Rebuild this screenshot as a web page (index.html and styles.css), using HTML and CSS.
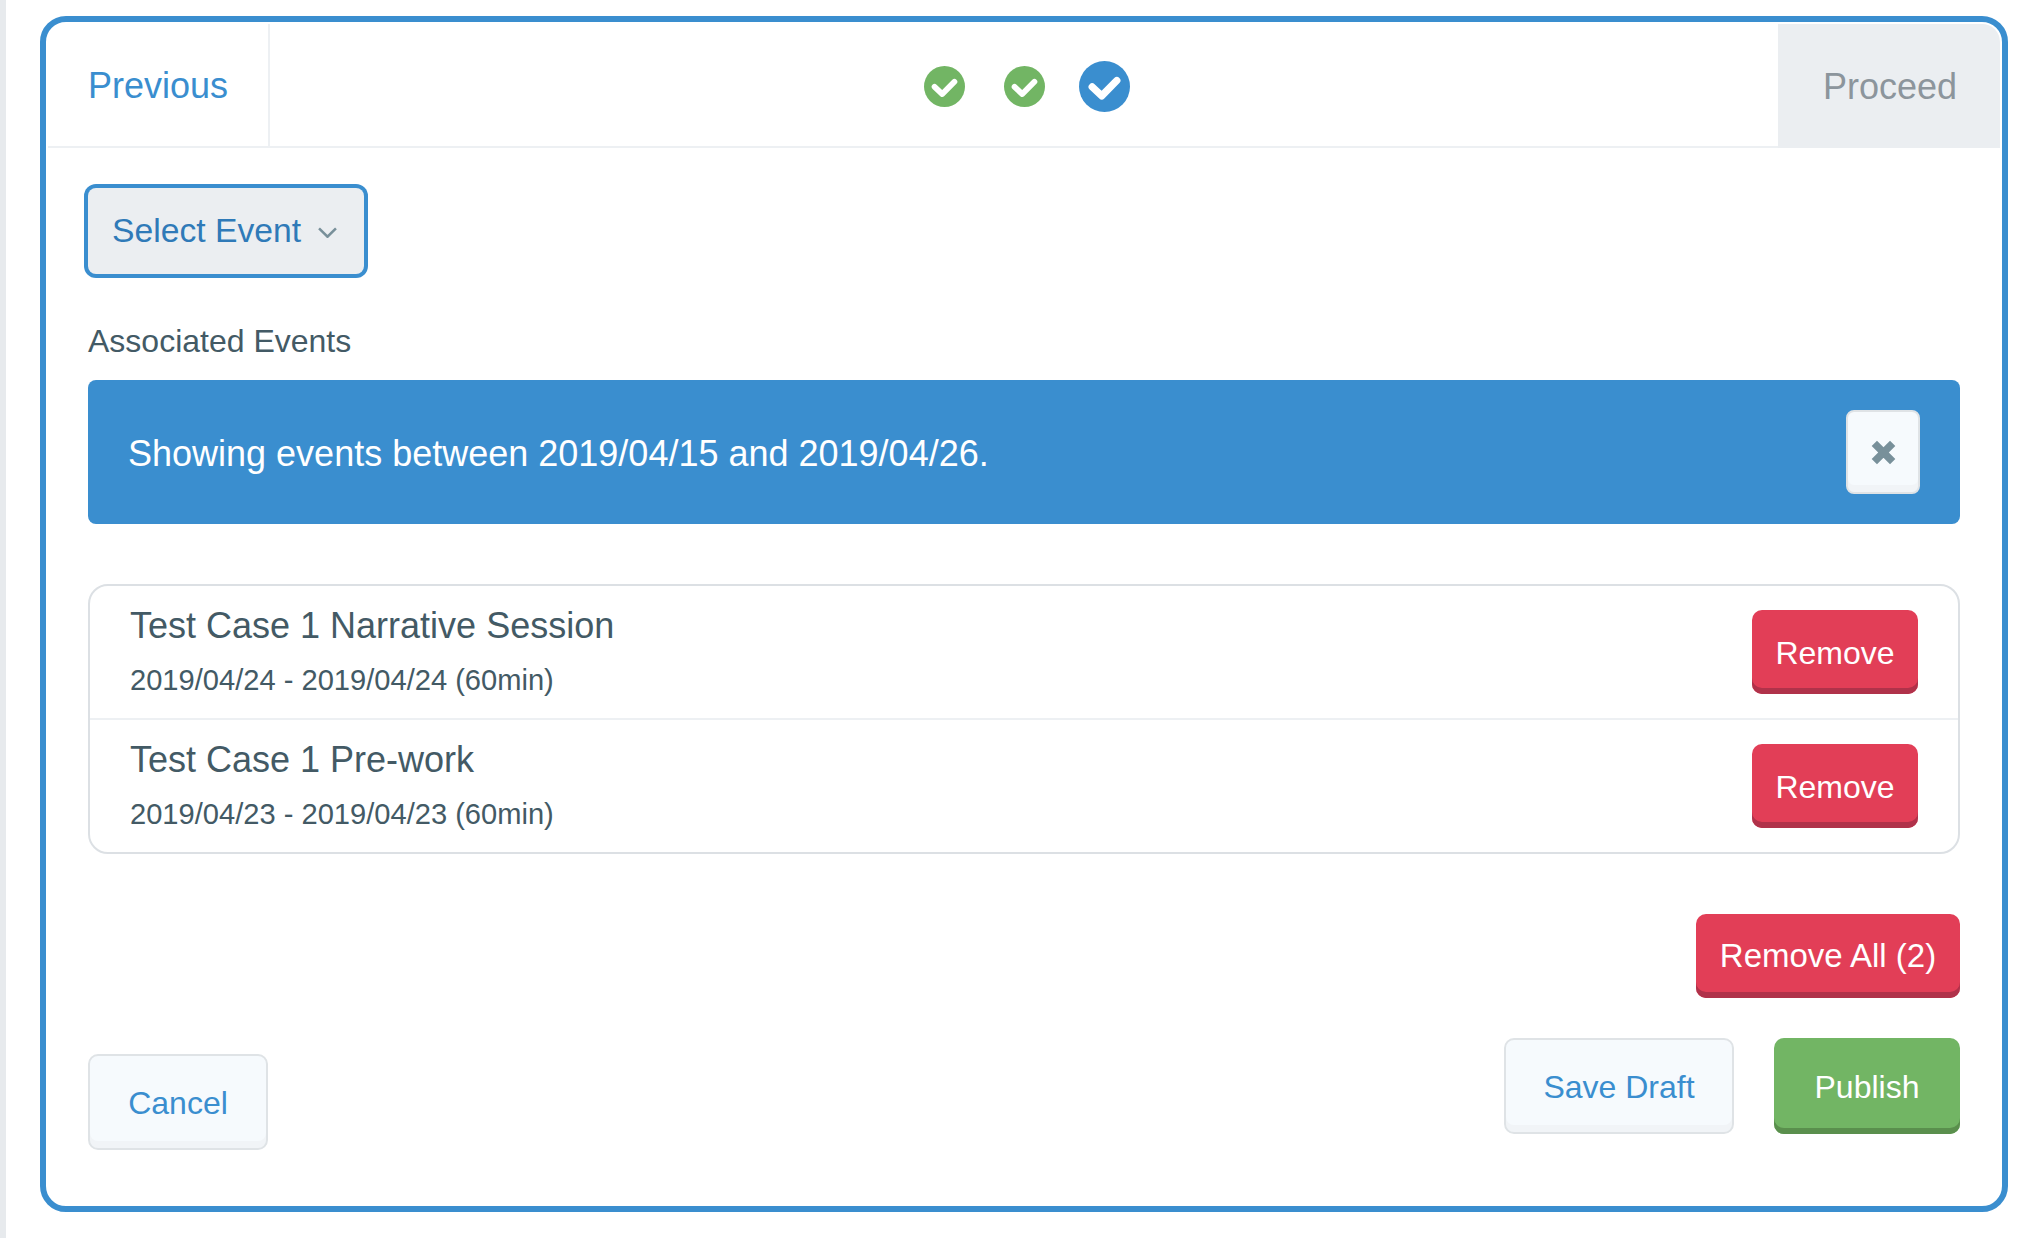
FILE: index.html
```html
<!DOCTYPE html>
<html lang="en">
<head>
    <meta charset="UTF-8">
    <title>Associated Events</title>
    <link rel="stylesheet" href="styles.css">
</head>
<body>
    <div class="page-edge"></div>

    <div class="frame">
        <div class="wizard-nav">
            <a class="nav-prev">Previous</a>
            <div class="steps">
                <span class="step">
                    <svg class="step-icon" viewBox="0 0 24 24"><circle cx="12" cy="12" r="12" fill="#72b564"/><path d="M6.2 12.2 10.7 16.4 17.8 9.2" fill="none" stroke="#fff" stroke-width="3.4" stroke-linecap="round" stroke-linejoin="round"/></svg>
                </span>
                <span class="step">
                    <svg class="step-icon" viewBox="0 0 24 24"><circle cx="12" cy="12" r="12" fill="#72b564"/><path d="M6.2 12.2 10.7 16.4 17.8 9.2" fill="none" stroke="#fff" stroke-width="3.4" stroke-linecap="round" stroke-linejoin="round"/></svg>
                </span>
                <span class="step">
                    <svg class="step-icon step-icon-active" viewBox="0 0 24 24"><circle cx="12" cy="12" r="12" fill="#3a8ecf"/><path d="M6.2 12.2 10.7 16.4 17.8 9.2" fill="none" stroke="#fff" stroke-width="3.4" stroke-linecap="round" stroke-linejoin="round"/></svg>
                </span>
            </div>
            <a class="nav-next">Proceed</a>
        </div>

        <div class="content">
            <button class="select-btn">
                Select Event
                <svg class="chevron" viewBox="0 0 18 10"><path d="M1 1 9 9 17 1" fill="none" stroke="#78909a" stroke-width="2.4"/></svg>
            </button>

            <div class="section-label">Associated Events</div>

            <div class="alert">
                <span class="alert-text">Showing events between 2019/04/15 and 2019/04/26.</span>
                <button class="alert-close">
                    <svg class="close-icon" viewBox="0 0 24 24"><path d="M3.2 3.2 20.8 20.8M20.8 3.2 3.2 20.8" fill="none" stroke="#78909a" stroke-width="7.2"/></svg>
                </button>
            </div>

            <div class="event-list">
                <div class="event-row">
                    <div class="event-info">
                        <div class="event-title">Test Case 1 Narrative Session</div>
                        <div class="event-date">2019/04/24 - 2019/04/24 (60min)</div>
                    </div>
                    <button class="btn btn-danger btn-remove">Remove</button>
                </div>
                <div class="event-row">
                    <div class="event-info">
                        <div class="event-title">Test Case 1 Pre-work</div>
                        <div class="event-date">2019/04/23 - 2019/04/23 (60min)</div>
                    </div>
                    <button class="btn btn-danger btn-remove">Remove</button>
                </div>
            </div>

            <div class="remove-all-row">
                <button class="btn btn-danger btn-remove-all">Remove All (2)</button>
            </div>

            <div class="footer">
                <button class="btn btn-light btn-cancel">Cancel</button>
                <div class="footer-right">
                    <button class="btn btn-light btn-draft">Save Draft</button>
                    <button class="btn btn-success btn-publish">Publish</button>
                </div>
            </div>
        </div>
    </div>
</body>
</html>
```

FILE: styles.css
```css
* {
    box-sizing: border-box;
}

body {
    display: flex;
    height: 1238px;
    margin: 0;
    overflow: hidden;
    font-family: "Liberation Sans", Arial, sans-serif;
    background: #fff;
    color: #435a65;
}

button {
    font-family: inherit;
    cursor: pointer;
}

.page-edge {
    width: 6px;
    background: #e7eaed;
}

.frame {
    width: 1968px;
    height: 1196px;
    margin: 16px 0 0 34px;
    padding: 2px;
    border: 6px solid #3a8ecf;
    border-radius: 26px;
}

.wizard-nav {
    display: flex;
    height: 124px;
}

.nav-prev {
    display: flex;
    align-items: center;
    width: 222px;
    padding: 2px 0 0 40px;
    border-right: 2px solid #edf0f3;
    border-bottom: 2px solid #edf0f3;
    font-size: 36px;
    color: #3a8ecf;
}

.steps {
    flex: 1;
    display: flex;
    justify-content: center;
    align-items: center;
    padding-top: 2px;
    border-bottom: 2px solid #edf0f3;
}

.step {
    display: flex;
    justify-content: center;
    width: 80px;
}

.step-icon {
    width: 41px;
    height: 41px;
}

.step-icon-active {
    width: 51px;
    height: 51px;
}

.nav-next {
    display: flex;
    align-items: center;
    justify-content: center;
    width: 222px;
    padding: 1px 0 0 2px;
    border-top-right-radius: 18px;
    background: #ebeef1;
    font-size: 36px;
    color: #8c959c;
}

.content {
    padding: 40px 40px 0;
}

.select-btn {
    display: flex;
    align-items: center;
    width: 276px;
    height: 86px;
    padding: 0 0 2px 24px;
    border: none;
    border-radius: 8px;
    box-shadow: 0 0 0 4px #3a8ecf;
    background: #ebeef1;
    font-size: 33.7px;
    color: #2f7ab8;
}

.chevron {
    width: 19px;
    height: 11px;
    margin: 5px 0 0 17px;
}

.section-label {
    margin-top: 47px;
    font-size: 32px;
    line-height: 40px;
}

.alert {
    display: flex;
    align-items: center;
    justify-content: space-between;
    height: 144px;
    margin-top: 19px;
    padding: 0 40px;
    border-radius: 8px;
    background: #3a8ecf;
    font-size: 36px;
    color: #fff;
}

.alert-text {
    padding-top: 3px;
}

.alert-close {
    display: flex;
    align-items: center;
    justify-content: center;
    width: 74px;
    height: 84px;
    padding: 0;
    border: 2px solid #dfe3e6;
    border-radius: 8px;
    box-shadow: inset 0 -7px 0 #f1f4f7;
    background: #f6fafd;
}

.close-icon {
    width: 25px;
    height: 25px;
}

.event-list {
    height: 270px;
    margin-top: 60px;
    border: 2px solid #dce0e4;
    border-radius: 20px;
}

.event-row {
    display: flex;
    align-items: center;
    justify-content: space-between;
    height: 132px;
    padding: 0 40px;
}

.event-row + .event-row {
    height: 134px;
    border-top: 2px solid #edf0f3;
}

.event-info {
    align-self: flex-start;
    padding-top: 18px;
}

.event-title {
    font-size: 36px;
    line-height: 44px;
}

.event-date {
    margin-top: 12px;
    font-size: 29.1px;
    line-height: 40px;
}

.btn {
    padding: 2px 0 0;
    border: none;
    border-radius: 10px;
    font-size: 32px;
}

.btn-danger {
    background: #e23e57;
    box-shadow: inset 0 -6px 0 #b0324a;
    color: #fff;
}

.btn-success {
    background: #72b564;
    box-shadow: inset 0 -6px 0 #5a8f4d;
    color: #fff;
}

.btn-light {
    border: 2px solid #dfe3e6;
    background: #f6fafd;
    box-shadow: inset 0 -7px 0 #f1f4f7;
    color: #3a8ecf;
}

.btn-remove {
    width: 166px;
    height: 84px;
}

.remove-all-row {
    display: flex;
    justify-content: flex-end;
    margin-top: 60px;
}

.btn-remove-all {
    width: 264px;
    height: 84px;
    padding-top: 0;
    font-size: 33px;
}

.footer {
    display: flex;
    align-items: flex-start;
    justify-content: space-between;
    margin-top: 40px;
}

.footer-right {
    display: flex;
    gap: 40px;
}

.btn-cancel {
    width: 180px;
    height: 96px;
    margin-top: 16px;
}

.btn-draft {
    width: 230px;
    height: 96px;
}

.btn-publish {
    width: 186px;
    height: 96px;
}
```
